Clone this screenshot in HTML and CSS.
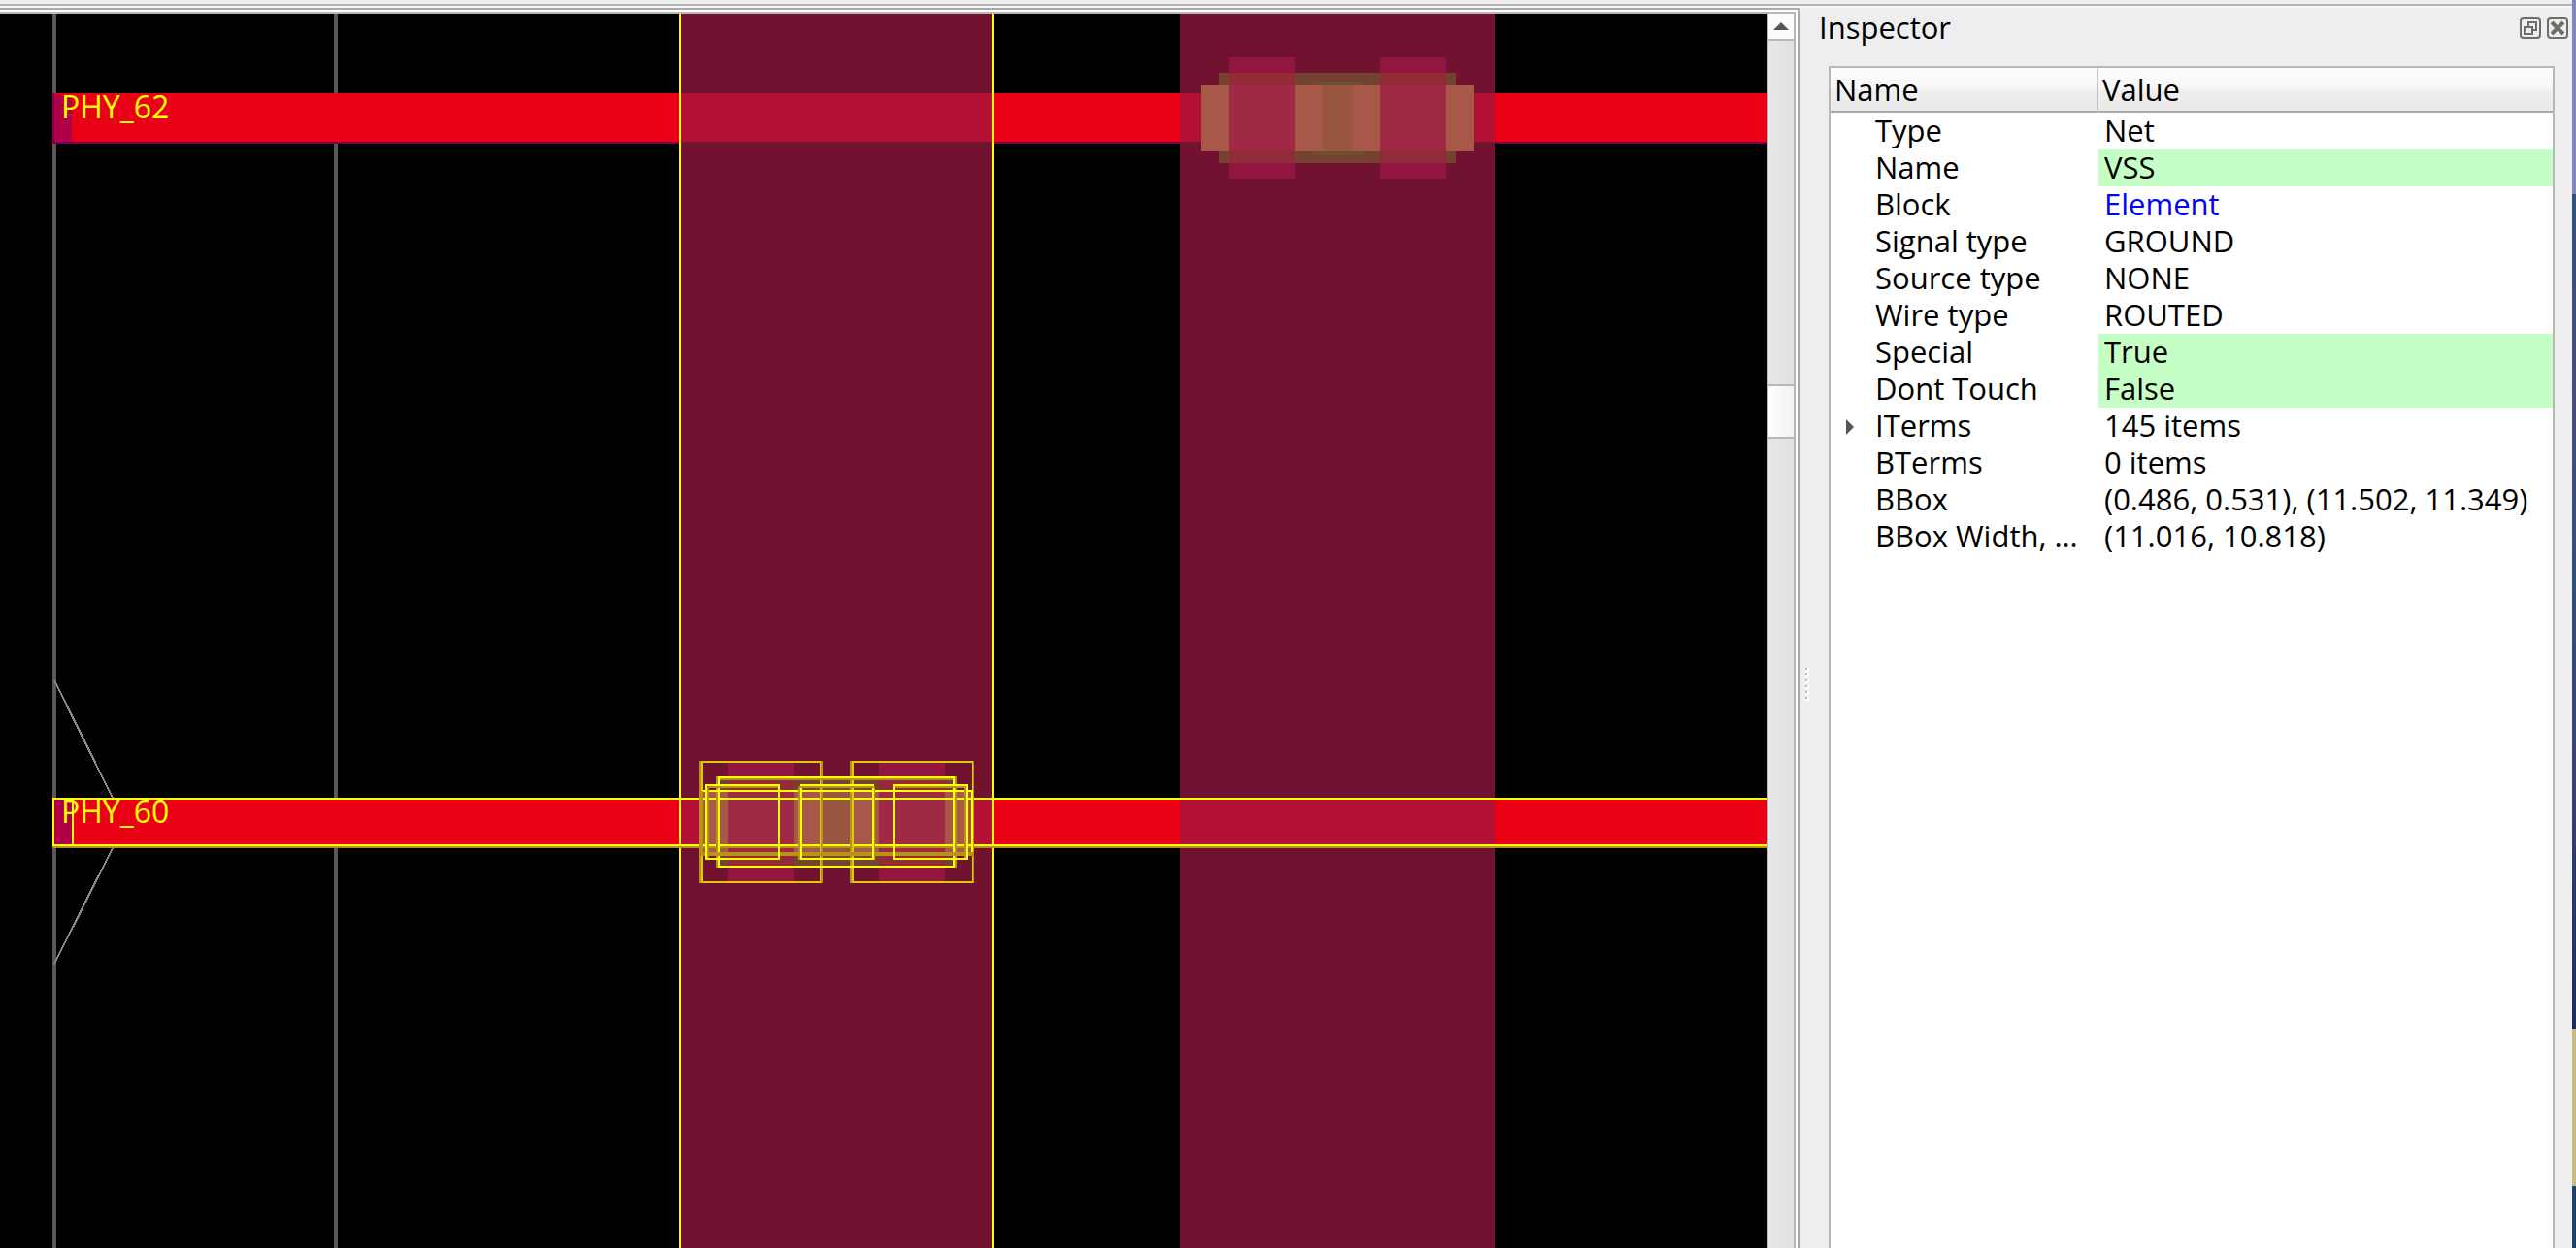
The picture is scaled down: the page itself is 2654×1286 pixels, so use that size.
FILE: index.html
```html
<!DOCTYPE html>
<html lang="en">
<head>
<meta charset="utf-8">
<meta name="viewport" content="width=device-width, initial-scale=1">
<title>Layout viewer</title>
<link rel="stylesheet" href="styles.css">
</head>
<body>
<div class="window">
  <div class="toolbar-edge"></div>
  <main class="workspace">
    <section class="viewer" aria-label="Layout">
      <svg class="canvas" role="img" aria-label="Layout canvas">
        <g transform="translate(0,-14)" shape-rendering="crispEdges">
          <!-- site and instance outlines -->
          <path class="outline" d="M56 0V4000M346 0V4000"/>
          <path class="outline-thin" d="M56 701L116 822M116 874L56 993"/>
          <!-- rails -->
          <rect class="rail-edge" x="54" y="96" width="100%" height="52"/>
          <rect class="rail" x="56" y="96" width="100%" height="50"/>
          <rect class="rail" x="56" y="822" width="100%" height="50"/>
          <rect class="pin" x="56" y="98" width="18" height="48"/>
          <rect class="pin" x="56" y="824" width="18" height="48"/>
          <!-- straps -->
          <rect class="strap" x="702" y="0" width="320" height="4000"/>
          <rect class="strap" x="1216" y="0" width="324" height="4000"/>
          <path class="crossing" d="M702 96h320v50h-320zM702 822h320v50h-320zM1216 96h324v50h-324zM1216 822h324v50h-324z"/>
          <!-- via stack -->
          <defs>
            <g id="via">
              <rect fill="#744230" x="1256" y="75" width="244" height="93"/>
              <rect fill="#70502c" x="1353" y="84" width="50" height="76"/>
              <rect fill="#a75849" x="1237" y="88" width="282" height="68"/>
              <rect fill="#985540" x="1363" y="88" width="30" height="68"/>
              <path fill="#92163f" d="M1266 59h68v125h-68zM1422 59h68v125h-68z"/>
              <path fill="#922a38" d="M1266 75h68v93h-68zM1422 75h68v93h-68z"/>
              <path fill="#a02945" d="M1266 88h68v68h-68zM1422 88h68v68h-68z"/>
            </g>
          </defs>
          <use href="#via"/>
          <use href="#via" x="-516" y="726"/>
          <!-- selection highlight -->
          <path class="mark" d="M701 0V4000M1023 0V4000M55 823H4000M55 871H4000M55 822V872M75 822V872"/>
          <path class="mark soft" d="M54 873H4000"/>
          <path class="mark faint" d="M723 785H846V909H723zM879 785H1002V909H879z"/>
          <path class="mark soft" d="M721 784V910M847 784V910M877 784V910M1003 784V910"/>
          <path class="mark soft" d="M739 800V894M985 800V894M738 803H986"/>
          <rect class="mark" x="741" y="801" width="242" height="92"/>
          <path class="mark" d="M723 815H1001V879"/>
          <path class="mark soft" d="M723 815V879H1003V815M721 881H1003"/>
          <path class="mark" d="M727 809H803V885H727zM825 809H899V885H825zM921 809H996V885H921z"/>
          <path class="mark soft" d="M729 811H802M729 811V884M823 811H901V886M823 811V886M922 811H994V884"/>
        </g>
        <g class="labels">
          <text x="63" y="108">PHY_62</text>
          <text x="63" y="834">PHY_60</text>
        </g>
      </svg>
      <div class="scrollbar">
        <button class="scroll-up" type="button" aria-label="Scroll up">
          <svg width="16" height="8" viewBox="0 0 16 8"><path fill="#555" d="M8 0L16 8H0z"/></svg>
        </button>
        <div class="track"><div class="thumb"></div></div>
      </div>
    </section>
    <div class="splitter"><svg width="4" height="34" viewBox="0 0 4 34"><path stroke="#fff" stroke-width="4" stroke-dasharray="4 2" d="M2 0V34"/><path stroke="#b8b8b8" stroke-width="2" stroke-dasharray="2 4" d="M1 0V34"/></svg></div>
    <aside class="inspector">
      <header class="dock-title">
        <h1>Inspector</h1>
        <button type="button" aria-label="Float">
          <svg width="22" height="22" viewBox="0 0 22 22" fill="none" stroke="#6f6d67" stroke-width="2"><rect x="1" y="1" width="20" height="20" rx="3"/><path d="M5 10h8v7H5zM9 10V5h8v8h-4"/></svg>
        </button>
        <button type="button" aria-label="Close">
          <svg width="22" height="22" viewBox="0 0 22 22" fill="none" stroke="#6f6d67" stroke-width="2"><rect x="1" y="1" width="20" height="20" rx="3"/><path stroke-width="4" d="M5 5L17 17M17 5L5 17"/></svg>
        </button>
      </header>
      <div class="tree">
        <table>
          <colgroup><col class="name-col"><col></colgroup>
          <thead><tr><th scope="col">Name</th><th scope="col">Value</th></tr></thead>
          <tbody>
            <tr><td>Type</td><td>Net</td></tr>
            <tr><td>Name</td><td class="editable">VSS</td></tr>
            <tr><td>Block</td><td><a href="#element">Element</a></td></tr>
            <tr><td>Signal type</td><td>GROUND</td></tr>
            <tr><td>Source type</td><td>NONE</td></tr>
            <tr><td>Wire type</td><td>ROUTED</td></tr>
            <tr><td>Special</td><td class="editable">True</td></tr>
            <tr><td>Dont Touch</td><td class="editable">False</td></tr>
            <tr><td class="parent"><button class="expander" type="button" aria-label="Expand ITerms"><svg width="8" height="16" viewBox="0 0 8 16"><path fill="#555" d="M0 0L8 8L0 16z"/></svg></button>ITerms</td><td>145 items</td></tr>
            <tr><td>BTerms</td><td>0 items</td></tr>
            <tr><td>BBox</td><td>(0.486, 0.531), (11.502, 11.349)</td></tr>
            <tr><td>BBox Width, …</td><td>(11.016, 10.818)</td></tr>
          </tbody>
        </table>
      </div>
    </aside>
  </main>
</div>
<div class="desktop"></div>
</body>
</html>
```
FILE: styles.css
```css
* { box-sizing: border-box; }
body {
  margin: 0;
  height: 100vh;
  display: flex;
  background: #eee;
  color: #000;
  font: 31px/36px "Open Sans", "Noto Sans", sans-serif;
}
button { padding: 0; border: 0; background: none; display: block; }
svg { display: block; }
.window { flex: 1; min-width: 0; display: flex; flex-direction: column; }
.toolbar-edge { flex: none; height: 8px; border-top: 4px solid #eee; border-bottom: 2px solid #f6f6f6; background: #b4b4b4; }
.workspace { flex: 1; min-height: 0; display: grid; grid-template-columns: minmax(0, 1fr) 30px 766px; }

.viewer {
  display: grid;
  grid-template-columns: minmax(0, 1fr) 30px;
  min-height: 0;
  border-top: 2px solid #aaa;
  border-right: 2px solid #aaa;
  padding: 2px 2px 0 0;
  background: #fff;
}
.canvas { width: 100%; height: 100%; background: #000; border-top: 2px solid #b8b8b8; }
.outline { stroke: #585858; stroke-width: 4; }
.outline-thin { stroke: #8a8a8a; stroke-width: 2; }
.rail { fill: #e90014; }
.rail-edge { fill: #7c0050; }
.pin { fill: #b20048; }
.strap { fill: #701230; }
.crossing { fill: #b21135; }
.mark { fill: none; stroke: #ff0; stroke-width: 2; }
.soft { stroke: #b99216; }
.faint { stroke: #dfc90c; }
.labels { fill: #ff0; font-size: 32px; }

.scrollbar { display: flex; flex-direction: column; border: 2px solid #b8b8b8; border-bottom: 0; min-height: 0; }
.scroll-up { flex: none; height: 28px; border-bottom: 2px solid #b8b8b8; background: #fcfcfc; display: grid; place-items: center; }
.track { flex: 1; background: linear-gradient(90deg, #e8e8e8, #e0e0e0); padding-top: 354px; }
.thumb { height: 56px; border: solid #b8b8b8; border-width: 2px 0; background: linear-gradient(90deg, #fff, #f2f2f2); }

.splitter { display: flex; align-items: center; padding: 116px 0 0 6px; }
.inspector { display: flex; flex-direction: column; min-height: 0; }
.dock-title { flex: none; height: 60px; display: flex; align-items: flex-start; gap: 6px; padding: 10px 4px 0 0; }
.dock-title h1 { flex: 1; margin: -8px 0 0 -10px; font-size: 31px; font-weight: 400; }
.tree { flex: 1; min-height: 0; margin-right: 18px; background: #fff; border: 2px solid #b8b8b8; border-bottom: 0; }
table { width: 100%; table-layout: fixed; border-collapse: separate; border-spacing: 0; }
.name-col { width: 276px; }
th {
  height: 46px;
  padding: 0 4px;
  text-align: left;
  font-weight: 400;
  background: linear-gradient(#fdfdfd, #f6f6f6 50%, #f0f0f0 50%, #e9e9e9);
  border-bottom: 2px solid #aaa;
}
th:first-child { border-right: 2px solid #c4c4c4; }
td { height: 38px; padding: 0 6px 2px; white-space: nowrap; }
td:first-child { padding-left: 46px; }
.editable { background: #c5ffc5; }
td a { color: #00f; text-decoration: none; }
td.parent:first-child { padding-left: 16px; }
.expander { display: inline-block; width: 30px; vertical-align: 2px; }
.desktop { width: 4px; background: linear-gradient(#8383c8 0 200px, #2c5284 200px, #4a4a88 400px, #2c5080 600px, #3c3f7c 800px, #1a2c66 1060px, #c8bc78 1060px 1222px, #1c4470 1222px); }
```
